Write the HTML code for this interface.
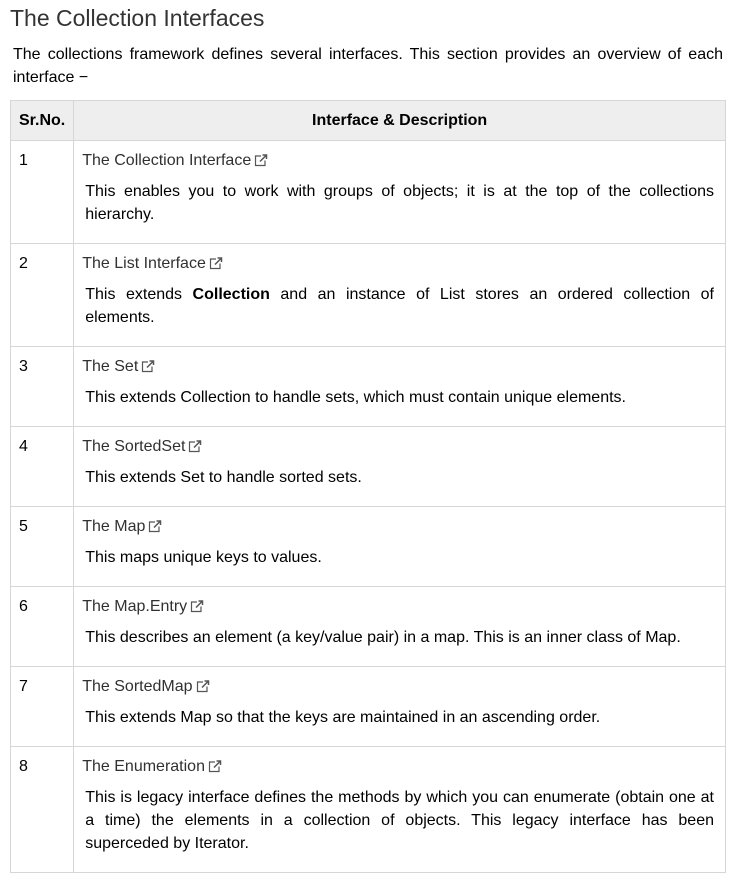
<!DOCTYPE html>
<html><head><style>
body{margin:0;background:#fff;font-family:"Liberation Sans",Arial,sans-serif;color:#000;width:739px}
h2{font-weight:normal;font-size:23px;color:#333;margin:0;position:absolute;left:10px;top:5px}
.intro{position:absolute;left:13px;top:43px;width:710px;font-size:16px;line-height:23px;text-align:justify;margin:0}
table{position:absolute;left:10px;top:100px;width:716px;border-collapse:collapse;font-size:16px}
th,td{border:1px solid #d6d6d6;vertical-align:top;padding:8px}
th{background:#eee;height:23px;line-height:23px;font-weight:bold;color:#000;padding:8px}
th:first-child{text-align:left;width:46px}
td{line-height:23px}
.lnk{color:#313131;height:23px}
.lnk svg{vertical-align:-2px;margin-left:3px}
p{margin:8px 0 9px;padding:0 3px;text-align:justify}
</style></head><body>
<h2>The Collection Interfaces</h2>
<p class="intro" style="padding:0;margin:0">The collections framework defines several interfaces. This section provides an overview of each interface −</p>
<table>
<tr><th>Sr.No.</th><th>Interface &amp; Description</th></tr>
<tr><td>1</td><td><div class="lnk">The Collection Interface<svg width="14" height="13" viewBox="0 0 14 13"><path d="M7 2H1.5v9.5H11V6.5" fill="none" stroke="#555" stroke-width="1.2"/><path d="M6 7.5L12 1.5M8.5 1h4v4" fill="none" stroke="#555" stroke-width="1.5"/></svg></div><p>This enables you to work with groups of objects; it is at the top of the collections hierarchy.</p></td></tr>
<tr><td>2</td><td><div class="lnk">The List Interface<svg width="14" height="13" viewBox="0 0 14 13"><path d="M7 2H1.5v9.5H11V6.5" fill="none" stroke="#555" stroke-width="1.2"/><path d="M6 7.5L12 1.5M8.5 1h4v4" fill="none" stroke="#555" stroke-width="1.5"/></svg></div><p>This extends <b>Collection</b> and an instance of List stores an ordered collection of elements.</p></td></tr>
<tr><td>3</td><td><div class="lnk">The Set<svg width="14" height="13" viewBox="0 0 14 13"><path d="M7 2H1.5v9.5H11V6.5" fill="none" stroke="#555" stroke-width="1.2"/><path d="M6 7.5L12 1.5M8.5 1h4v4" fill="none" stroke="#555" stroke-width="1.5"/></svg></div><p>This extends Collection to handle sets, which must contain unique elements.</p></td></tr>
<tr><td>4</td><td><div class="lnk">The SortedSet<svg width="14" height="13" viewBox="0 0 14 13"><path d="M7 2H1.5v9.5H11V6.5" fill="none" stroke="#555" stroke-width="1.2"/><path d="M6 7.5L12 1.5M8.5 1h4v4" fill="none" stroke="#555" stroke-width="1.5"/></svg></div><p>This extends Set to handle sorted sets.</p></td></tr>
<tr><td>5</td><td><div class="lnk">The Map<svg width="14" height="13" viewBox="0 0 14 13"><path d="M7 2H1.5v9.5H11V6.5" fill="none" stroke="#555" stroke-width="1.2"/><path d="M6 7.5L12 1.5M8.5 1h4v4" fill="none" stroke="#555" stroke-width="1.5"/></svg></div><p>This maps unique keys to values.</p></td></tr>
<tr><td>6</td><td><div class="lnk">The Map.Entry<svg width="14" height="13" viewBox="0 0 14 13"><path d="M7 2H1.5v9.5H11V6.5" fill="none" stroke="#555" stroke-width="1.2"/><path d="M6 7.5L12 1.5M8.5 1h4v4" fill="none" stroke="#555" stroke-width="1.5"/></svg></div><p>This describes an element (a key/value pair) in a map. This is an inner class of Map.</p></td></tr>
<tr><td>7</td><td><div class="lnk">The SortedMap<svg width="14" height="13" viewBox="0 0 14 13"><path d="M7 2H1.5v9.5H11V6.5" fill="none" stroke="#555" stroke-width="1.2"/><path d="M6 7.5L12 1.5M8.5 1h4v4" fill="none" stroke="#555" stroke-width="1.5"/></svg></div><p>This extends Map so that the keys are maintained in an ascending order.</p></td></tr>
<tr><td>8</td><td><div class="lnk">The Enumeration<svg width="14" height="13" viewBox="0 0 14 13"><path d="M7 2H1.5v9.5H11V6.5" fill="none" stroke="#555" stroke-width="1.2"/><path d="M6 7.5L12 1.5M8.5 1h4v4" fill="none" stroke="#555" stroke-width="1.5"/></svg></div><p>This is legacy interface defines the methods by which you can enumerate (obtain one at a time) the elements in a collection of objects. This legacy interface has been superceded by Iterator.</p></td></tr>
</table>
</body></html>
